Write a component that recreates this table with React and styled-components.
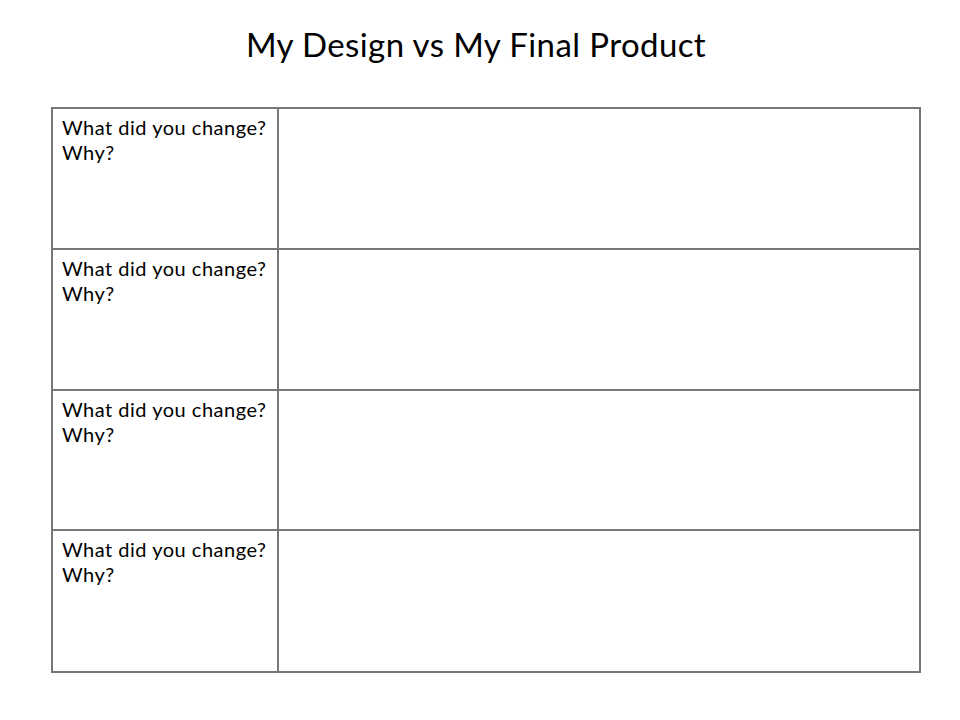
import React from 'react'
import styled, { createGlobalStyle } from 'styled-components'

const GlobalStyle = createGlobalStyle`
  html, body {
    margin: 0;
    padding: 0;
    background: #ffffff;
  }
  body {
    font-family: Lato, "Open Sans", "Liberation Sans", sans-serif;
    color: #000000;
  }
`

const rows = [1, 2, 3, 4]

function App() {
  return (
    <>
      <GlobalStyle />
      <Slide>
        <Title>My Design vs My Final Product</Title>
        <Table>
          {rows.map((n, i) => (
            <React.Fragment key={n}>
              <Label last={i === rows.length - 1}>
                What did you change?
                <br />
                Why?
              </Label>
              <Answer last={i === rows.length - 1} />
            </React.Fragment>
          ))}
        </Table>
      </Slide>
    </>
  )
}

export default App

const Slide = styled.div`
  width: 960px;
  height: 720px;
  box-sizing: border-box;
  padding-top: 24px;
  padding-left: 51px;
  overflow: hidden;
`
const Title = styled.h1`
  margin: 0 0 0 -51px;
  width: 960px;
  padding-right: 8px;
  box-sizing: border-box;
  text-align: center;
  font-size: 33px;
  letter-spacing: 0.4px;
  font-weight: 400;
  line-height: 40px;
  height: 83px;
`
const Table = styled.div`
  width: 870px;
  height: 566px;
  box-sizing: border-box;
  border: 2px solid #777777;
  display: grid;
  grid-template-columns: 226px 1fr;
  grid-template-rows: 141px 141px 140px 140px;
`
const Label = styled.div`
  box-sizing: border-box;
  border-right: 2px solid #777777;
  border-bottom: ${(p) => (p.last ? 'none' : '2px solid #777777')};
  padding: 6px 0 0 9px;
  font-size: 20px;
  letter-spacing: 0.5px;
  line-height: 25px;
`
const Answer = styled.div`
  box-sizing: border-box;
  border-bottom: ${(p) => (p.last ? 'none' : '2px solid #777777')};
`
